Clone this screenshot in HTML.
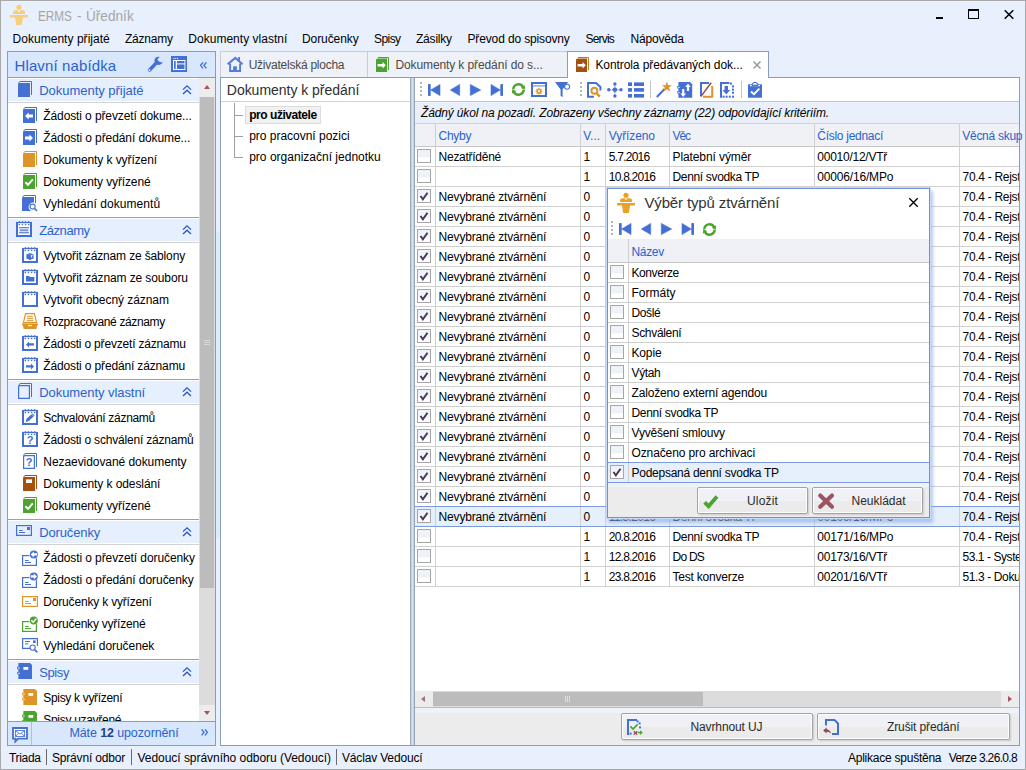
<!DOCTYPE html><html><head><meta charset="utf-8"><title>ERMS</title><style>
*{box-sizing:border-box;margin:0;padding:0}
html,body{width:1026px;height:770px;overflow:hidden}
body{background:#e8f0fd;font-family:"Liberation Sans",sans-serif;font-size:12px;color:#000;position:relative}
.b{position:absolute}
.t{position:absolute;white-space:nowrap;line-height:16px;height:16px}
svg{position:absolute;overflow:visible}
.bl{color:#2a62cc}
.it{font-style:italic}
.bd{font-weight:bold}
.gh13{font-size:13px}
.btn{color:#2a2a2a}
</style></head><body>
<div class="b" style="left:0px;top:0px;width:1026px;height:770px;border:1px solid #a9a9a9;"></div>
<svg style="left:9px;top:4px" width="20" height="22" viewBox="0 0 20 22"><circle cx="10" cy="3.3" r="2.6" fill="#f6cf7a"/><path d="M4 10V8.2Q4 6.2 6.5 6.2H13.5Q16 6.2 16 8.2V10Z" fill="#f6cf7a"/><rect x="9.1" y="6.1" width="1.8" height="1.6" fill="#fff" opacity=".85"/><path d="M1 11H19V13.4H14L12.8 21H7.2L6 13.4H1Z" fill="#f6cf7a"/></svg>
<span class="t" style="left:37.6px;top:7px;font-size:14.5px;color:#a6a6a6;line-height:18px;height:18px;transform:scaleX(0.8092);transform-origin:0 0">ERMS</span>
<span class="t" style="left:76.7px;top:7px;font-size:14.5px;color:#a6a6a6;line-height:18px;height:18px;transform:scaleX(0.9525);transform-origin:0 0">-</span>
<span class="t" style="left:86.2px;top:7px;font-size:14.5px;color:#a6a6a6;line-height:18px;height:18px;transform:scaleX(0.9395);transform-origin:0 0">Úředník</span>
<div class="b" style="left:936px;top:17px;width:7px;height:2px;background:#000;"></div>
<div class="b" style="left:968px;top:9px;width:11px;height:10px;border:1px solid #000;border-top-width:2px;"></div>
<svg style="left:1004px;top:10px" width="10" height="9" viewBox="0 0 10 9"><path d="M0.7 0.3L9.3 8.7M9.3 0.3L0.7 8.7" stroke="#000" stroke-width="1.5" fill="none"/></svg>
<span class="t mn" style="left:12.5px;top:31px;letter-spacing:0.036px;">Dokumenty přijaté</span>
<span class="t mn" style="left:125px;top:31px;letter-spacing:-0.238px;">Záznamy</span>
<span class="t mn" style="left:188.3px;top:31px;letter-spacing:0.018px;">Dokumenty vlastní</span>
<span class="t mn" style="left:302px;top:31px;letter-spacing:-0.078px;">Doručenky</span>
<span class="t mn" style="left:374px;top:31px;letter-spacing:-0.565px;">Spisy</span>
<span class="t mn" style="left:416px;top:31px;letter-spacing:-0.206px;">Zásilky</span>
<span class="t mn" style="left:467.5px;top:31px;letter-spacing:-0.139px;">Převod do spisovny</span>
<span class="t mn" style="left:585.6px;top:31px;letter-spacing:-0.844px;">Servis</span>
<span class="t mn" style="left:630.5px;top:31px;letter-spacing:-0.201px;">Nápověda</span>
<div class="b" style="left:7px;top:51px;width:209px;height:695px;background:#fff;border:1px solid #8b9db5;"></div>
<div class="b" style="left:7px;top:51px;width:209px;height:27px;background:#d9e7fd;border:1px solid #8b9db5;"></div>
<span class="t bl" style="left:14.5px;top:56px;font-size:15px;line-height:20px;height:20px;letter-spacing:0.121px">Hlavní nabídka</span>
<svg style="left:147px;top:56px" width="17" height="17" viewBox="0 0 17 17"><path d="M2.6 14L9.6 6.6" stroke="#4470d4" stroke-width="3.5" stroke-linecap="round" fill="none"/><circle cx="11.6" cy="4.8" r="4.1" fill="#4470d4"/><path d="M11.4 5L16 -0.6L18 3.4L14.6 6.6Z" fill="#d9e7fd"/><path d="M10.2 3.6L13.4 0.2L15.4 2.6L12.4 5.8Z" fill="#d9e7fd"/><circle cx="2.5" cy="14.1" r="0.9" fill="#fff"/></svg>
<svg style="left:171px;top:56px" width="16" height="16" viewBox="0 0 16 16"><rect x="0" y="0" width="16" height="16" fill="#4470d4"/><rect x="2.4" y="1.9" width="1" height="1" fill="#fff"/><rect x="4.2" y="1.9" width="1" height="1" fill="#fff"/><rect x="6" y="1.9" width="1" height="1" fill="#fff"/><rect x="2" y="4" width="12.4" height="10" fill="#fff"/><rect x="3" y="5" width="1.7" height="8" fill="#4470d4"/><rect x="5.9" y="5" width="7.6" height="2.4" fill="#4470d4"/><rect x="5.9" y="8.4" width="7.6" height="4.6" fill="#4470d4"/></svg>
<svg style="left:200px;top:62px" width="7" height="7" viewBox="0 0 7 7"><path d="M3 0.3L0.6 3.3L3 6.3M6.4 0.3L4 3.3L6.4 6.3" stroke="#3b6fd8" stroke-width="1.35" fill="none"/></svg>
<div class="b" style="left:199px;top:78px;width:16px;height:643px;background:#dcdcdc;"></div>
<div class="b" style="left:199px;top:78px;width:16px;height:19px;background:#ececec;"></div>
<div class="b" style="left:199px;top:705px;width:16px;height:16px;background:#ececec;"></div>
<div class="b" style="left:200px;top:97px;width:14px;height:491px;background:#bcbcbc;"></div>
<svg style="left:204px;top:85px" width="6" height="4"><path d="M3 0L6 4H0Z" fill="#a85060"/></svg>
<svg style="left:204px;top:711px" width="6" height="4"><path d="M0 0H6L3 4Z" fill="#a85060"/></svg>
<div class="b" style="left:204px;top:340px;width:6px;height:1px;background:#d9d9d9;"></div>
<div class="b" style="left:204px;top:342px;width:6px;height:1px;background:#d9d9d9;"></div>
<div class="b" style="left:204px;top:344px;width:6px;height:1px;background:#d9d9d9;"></div>
<div class="b" style="left:8px;top:78px;width:191px;height:643px;overflow:hidden">
<div class="b" style="left:0;top:1px;width:191px;height:22px;background:#e6effd"></div>
<div class="b" style="left:0;top:24px;width:191px;height:1px;background:#d2d2d2"></div>
<svg style="left:10px;top:3px" width="14" height="16" viewBox="0 0 14 16"><path d="M0 3.5Q0 2 1.5 2H12V16H0Z" fill="#4470d4"/><path d="M0.4 2.6L1.8 0.5H13.5V14" stroke="#4470d4" stroke-width="1" fill="none"/></svg>
<span class="t bl gh13" style="left:31.2px;top:5px;letter-spacing:-0.022px;">Dokumenty přijaté</span>
<svg style="left:174px;top:7px" width="10" height="10" viewBox="0 0 10 10"><path d="M1 4.6L5 0.8L9 4.6M1 9L5 5.2L9 9" stroke="#2458c8" stroke-width="1.3" fill="none"/></svg>
<svg style="left:15px;top:29px" width="14" height="16" viewBox="0 0 14 16"><path d="M0 3.5Q0 2 1.5 2H12V16H0Z" fill="#4470d4"/><path d="M0.4 2.6L1.8 0.5H13.5V14" stroke="#4470d4" stroke-width="1" fill="none"/><path d="M2 9L5.6 5.4V7.6H10V10.4H5.6V12.6Z" fill="#fff"/></svg>
<span class="t nv" style="left:35.3px;top:30px;letter-spacing:-0.109px;">Žádosti o převzetí dokume...</span>
<svg style="left:15px;top:51px" width="14" height="16" viewBox="0 0 14 16"><path d="M0 3.5Q0 2 1.5 2H12V16H0Z" fill="#4470d4"/><path d="M0.4 2.6L1.8 0.5H13.5V14" stroke="#4470d4" stroke-width="1" fill="none"/><path d="M10 9L6.4 5.4V7.6H2V10.4H6.4V12.6Z" fill="#fff"/></svg>
<span class="t nv" style="left:35.3px;top:52px;letter-spacing:-0.088px;">Žádosti o předání dokume...</span>
<svg style="left:15px;top:73px" width="14" height="16" viewBox="0 0 14 16"><path d="M0 3.5Q0 2 1.5 2H12V16H0Z" fill="#dd9428"/><path d="M0.4 2.6L1.8 0.5H13.5V14" stroke="#dd9428" stroke-width="1" fill="none"/></svg>
<span class="t nv" style="left:35.3px;top:74px;letter-spacing:-0.081px;">Dokumenty k vyřízení</span>
<svg style="left:15px;top:95px" width="14" height="16" viewBox="0 0 14 16"><path d="M0 3.5Q0 2 1.5 2H12V16H0Z" fill="#4da32f"/><path d="M0.4 2.6L1.8 0.5H13.5V14" stroke="#4da32f" stroke-width="1" fill="none"/><path d="M2.4 9.2L5 11.8L9.8 6.4" stroke="#fff" stroke-width="2" fill="none"/></svg>
<span class="t nv" style="left:35.3px;top:96px;letter-spacing:-0.119px;">Dokumenty vyřízené</span>
<svg style="left:14px;top:117px" width="16" height="17" viewBox="0 0 16 17"><path d="M0 3.5Q0 2 1.5 2H12V16H0Z" fill="#4470d4"/><path d="M0.4 2.6L1.8 0.5H13.5V14" stroke="#4470d4" stroke-width="1" fill="none"/><circle cx="11" cy="12" r="4.4" fill="#fff"/><circle cx="10.6" cy="11.6" r="2.5" fill="#fff" stroke="#4470d4" stroke-width="1.1"/><path d="M12.4 13.4L15 16" stroke="#4470d4" stroke-width="1.5"/></svg>
<span class="t nv" style="left:35.3px;top:118px;letter-spacing:0.063px;">Vyhledání dokumentů</span>
<div class="b" style="left:0;top:139px;width:191px;height:1px;background:#8ea2b8"></div>
<div class="b" style="left:0;top:141px;width:191px;height:22px;background:#e6effd"></div>
<div class="b" style="left:0;top:164px;width:191px;height:1px;background:#d2d2d2"></div>
<svg style="left:8px;top:143px" width="16" height="16" viewBox="0 0 16 16"><path d="M1 1.4V15H15V1.4" fill="#fff" stroke="#4470d4" stroke-width="2"/><rect x="0" y="0.9" width="16" height="1.3" fill="#4470d4"/><path d="M1.9 1.3L3.3 -0.1L4.699999999999999 1.3Z" fill="#4470d4"/><circle cx="3.3" cy="3.5" r="0.8" fill="#4470d4"/><path d="M5.0 1.3L6.4 -0.1L7.800000000000001 1.3Z" fill="#4470d4"/><circle cx="6.4" cy="3.5" r="0.8" fill="#4470d4"/><path d="M8.2 1.3L9.6 -0.1L11.0 1.3Z" fill="#4470d4"/><circle cx="9.6" cy="3.5" r="0.8" fill="#4470d4"/><path d="M11.299999999999999 1.3L12.7 -0.1L14.1 1.3Z" fill="#4470d4"/><circle cx="12.7" cy="3.5" r="0.8" fill="#4470d4"/><rect x="3.1" y="6.2" width="9.8" height="1.1" fill="#4470d4"/><rect x="3.6" y="8.3" width="8.8" height="2" fill="#4470d4" opacity=".75"/><rect x="3.1" y="11.2" width="9.8" height="1.1" fill="#4470d4"/></svg>
<span class="t bl gh13" style="left:31.2px;top:145px;letter-spacing:-0.425px;">Záznamy</span>
<svg style="left:174px;top:147px" width="10" height="10" viewBox="0 0 10 10"><path d="M1 4.6L5 0.8L9 4.6M1 9L5 5.2L9 9" stroke="#2458c8" stroke-width="1.3" fill="none"/></svg>
<svg style="left:14px;top:169px" width="16" height="16" viewBox="0 0 16 16"><path d="M1 1.4V15H15V1.4" fill="#fff" stroke="#4470d4" stroke-width="2"/><rect x="0" y="0.9" width="16" height="1.3" fill="#4470d4"/><path d="M1.9 1.3L3.3 -0.1L4.699999999999999 1.3Z" fill="#4470d4"/><circle cx="3.3" cy="3.5" r="0.8" fill="#4470d4"/><path d="M5.0 1.3L6.4 -0.1L7.800000000000001 1.3Z" fill="#4470d4"/><circle cx="6.4" cy="3.5" r="0.8" fill="#4470d4"/><path d="M8.2 1.3L9.6 -0.1L11.0 1.3Z" fill="#4470d4"/><circle cx="9.6" cy="3.5" r="0.8" fill="#4470d4"/><path d="M11.299999999999999 1.3L12.7 -0.1L14.1 1.3Z" fill="#4470d4"/><circle cx="12.7" cy="3.5" r="0.8" fill="#4470d4"/><path d="M4.4 7.4L8 6L11.6 7.4V11.6L8 13L4.4 11.6Z" fill="#4470d4"/><path d="M8.6 8.6L10.8 7.8L9.4 11Z" fill="#fff"/><ellipse cx="8" cy="6.9" rx="2" ry="0.6" fill="#7d9ce4"/></svg>
<span class="t nv" style="left:35.3px;top:170px;letter-spacing:-0.15px;">Vytvořit záznam ze šablony</span>
<svg style="left:14px;top:191px" width="16" height="16" viewBox="0 0 16 16"><path d="M1 1.4V15H15V1.4" fill="#fff" stroke="#4470d4" stroke-width="2"/><rect x="0" y="0.9" width="16" height="1.3" fill="#4470d4"/><path d="M1.9 1.3L3.3 -0.1L4.699999999999999 1.3Z" fill="#4470d4"/><circle cx="3.3" cy="3.5" r="0.8" fill="#4470d4"/><path d="M5.0 1.3L6.4 -0.1L7.800000000000001 1.3Z" fill="#4470d4"/><circle cx="6.4" cy="3.5" r="0.8" fill="#4470d4"/><path d="M8.2 1.3L9.6 -0.1L11.0 1.3Z" fill="#4470d4"/><circle cx="9.6" cy="3.5" r="0.8" fill="#4470d4"/><path d="M11.299999999999999 1.3L12.7 -0.1L14.1 1.3Z" fill="#4470d4"/><circle cx="12.7" cy="3.5" r="0.8" fill="#4470d4"/><path d="M4 7H7L8 8H12.4V12.6H4Z" fill="#4470d4"/></svg>
<span class="t nv" style="left:35.3px;top:192px;letter-spacing:-0.115px;">Vytvořit záznam ze souboru</span>
<svg style="left:14px;top:213px" width="16" height="16" viewBox="0 0 16 16"><path d="M1 1.4V15H15V1.4" fill="#fff" stroke="#4470d4" stroke-width="2"/><rect x="0" y="0.9" width="16" height="1.3" fill="#4470d4"/><path d="M1.9 1.3L3.3 -0.1L4.699999999999999 1.3Z" fill="#4470d4"/><circle cx="3.3" cy="3.5" r="0.8" fill="#4470d4"/><path d="M5.0 1.3L6.4 -0.1L7.800000000000001 1.3Z" fill="#4470d4"/><circle cx="6.4" cy="3.5" r="0.8" fill="#4470d4"/><path d="M8.2 1.3L9.6 -0.1L11.0 1.3Z" fill="#4470d4"/><circle cx="9.6" cy="3.5" r="0.8" fill="#4470d4"/><path d="M11.299999999999999 1.3L12.7 -0.1L14.1 1.3Z" fill="#4470d4"/><circle cx="12.7" cy="3.5" r="0.8" fill="#4470d4"/></svg>
<span class="t nv" style="left:35.3px;top:214px;letter-spacing:-0.063px;">Vytvořit obecný záznam</span>
<svg style="left:14px;top:235px" width="16" height="16" viewBox="0 0 16 16"><path d="M3.6 0.6H12.4L14.6 9.6H1.4Z" fill="#fff" stroke="#dd9428" stroke-width="1.2"/><rect x="5.2" y="2.8" width="5.6" height="1" fill="#dd9428"/><rect x="4.95" y="4.8" width="6.1" height="1" fill="#dd9428"/><rect x="4.7" y="6.8" width="6.6" height="1" fill="#dd9428"/><rect x="4.45" y="8.8" width="7.1" height="1" fill="#dd9428"/><path d="M0 10.4H16V12.2H15L14.4 16H1.6L1 12.2H0Z" fill="#dd9428"/><rect x="6" y="12" width="4" height="1.1" fill="#fff"/></svg>
<span class="t nv" style="left:35.3px;top:236px;letter-spacing:-0.356px;">Rozpracované záznamy</span>
<svg style="left:14px;top:257px" width="16" height="16" viewBox="0 0 16 16"><path d="M1 1.4V15H15V1.4" fill="#fff" stroke="#4470d4" stroke-width="2"/><rect x="0" y="0.9" width="16" height="1.3" fill="#4470d4"/><path d="M1.9 1.3L3.3 -0.1L4.699999999999999 1.3Z" fill="#4470d4"/><circle cx="3.3" cy="3.5" r="0.8" fill="#4470d4"/><path d="M5.0 1.3L6.4 -0.1L7.800000000000001 1.3Z" fill="#4470d4"/><circle cx="6.4" cy="3.5" r="0.8" fill="#4470d4"/><path d="M8.2 1.3L9.6 -0.1L11.0 1.3Z" fill="#4470d4"/><circle cx="9.6" cy="3.5" r="0.8" fill="#4470d4"/><path d="M11.299999999999999 1.3L12.7 -0.1L14.1 1.3Z" fill="#4470d4"/><circle cx="12.7" cy="3.5" r="0.8" fill="#4470d4"/><path d="M4 9.4L7 6.4V8.2H12V10.6H7V12.4Z" fill="#4470d4"/></svg>
<span class="t nv" style="left:35.3px;top:258px;letter-spacing:-0.189px;">Žádosti o převzetí záznamu</span>
<svg style="left:14px;top:279px" width="16" height="16" viewBox="0 0 16 16"><path d="M1 1.4V15H15V1.4" fill="#fff" stroke="#4470d4" stroke-width="2"/><rect x="0" y="0.9" width="16" height="1.3" fill="#4470d4"/><path d="M1.9 1.3L3.3 -0.1L4.699999999999999 1.3Z" fill="#4470d4"/><circle cx="3.3" cy="3.5" r="0.8" fill="#4470d4"/><path d="M5.0 1.3L6.4 -0.1L7.800000000000001 1.3Z" fill="#4470d4"/><circle cx="6.4" cy="3.5" r="0.8" fill="#4470d4"/><path d="M8.2 1.3L9.6 -0.1L11.0 1.3Z" fill="#4470d4"/><circle cx="9.6" cy="3.5" r="0.8" fill="#4470d4"/><path d="M11.299999999999999 1.3L12.7 -0.1L14.1 1.3Z" fill="#4470d4"/><circle cx="12.7" cy="3.5" r="0.8" fill="#4470d4"/><path d="M12 9.4L9 6.4V8.2H4V10.6H9V12.4Z" fill="#4470d4"/></svg>
<span class="t nv" style="left:35.3px;top:280px;letter-spacing:-0.148px;">Žádosti o předání záznamu</span>
<div class="b" style="left:0;top:301px;width:191px;height:1px;background:#8ea2b8"></div>
<div class="b" style="left:0;top:303px;width:191px;height:22px;background:#e6effd"></div>
<div class="b" style="left:0;top:326px;width:191px;height:1px;background:#d2d2d2"></div>
<svg style="left:10px;top:305px" width="14" height="16" viewBox="0 0 14 16"><path d="M0.6 3.8Q0.6 2.6 1.8 2.6H11.4V15.4H0.6Z" fill="none" stroke="#4470d4" stroke-width="1.2"/><path d="M0.5 2.8L2 0.5H13.5V14" stroke="#4470d4" stroke-width="1" fill="none"/></svg>
<span class="t bl gh13" style="left:31.2px;top:307px;letter-spacing:-0.057px;">Dokumenty vlastní</span>
<svg style="left:174px;top:309px" width="10" height="10" viewBox="0 0 10 10"><path d="M1 4.6L5 0.8L9 4.6M1 9L5 5.2L9 9" stroke="#2458c8" stroke-width="1.3" fill="none"/></svg>
<svg style="left:14px;top:331px" width="16" height="16" viewBox="0 0 16 16"><path d="M1 1.4V15H15V1.4" fill="#fff" stroke="#4470d4" stroke-width="2"/><rect x="0" y="0.9" width="16" height="1.3" fill="#4470d4"/><path d="M1.9 1.3L3.3 -0.1L4.699999999999999 1.3Z" fill="#4470d4"/><circle cx="3.3" cy="3.5" r="0.8" fill="#4470d4"/><path d="M5.0 1.3L6.4 -0.1L7.800000000000001 1.3Z" fill="#4470d4"/><circle cx="6.4" cy="3.5" r="0.8" fill="#4470d4"/><path d="M8.2 1.3L9.6 -0.1L11.0 1.3Z" fill="#4470d4"/><circle cx="9.6" cy="3.5" r="0.8" fill="#4470d4"/><path d="M11.299999999999999 1.3L12.7 -0.1L14.1 1.3Z" fill="#4470d4"/><circle cx="12.7" cy="3.5" r="0.8" fill="#4470d4"/><path d="M3.6 13L4.6 9.8L10.4 4.4L12.6 6.6L6.8 12Z" fill="#4470d4"/><path d="M9.6 5.2L11.8 7.4" stroke="#fff" stroke-width="0.6"/></svg>
<span class="t nv" style="left:35.3px;top:332px;letter-spacing:-0.303px;">Schvalování záznamů</span>
<svg style="left:14px;top:353px" width="16" height="16" viewBox="0 0 16 16"><path d="M1 1.4V15H15V1.4" fill="#fff" stroke="#4470d4" stroke-width="2"/><rect x="0" y="0.9" width="16" height="1.3" fill="#4470d4"/><path d="M1.9 1.3L3.3 -0.1L4.699999999999999 1.3Z" fill="#4470d4"/><circle cx="3.3" cy="3.5" r="0.8" fill="#4470d4"/><path d="M5.0 1.3L6.4 -0.1L7.800000000000001 1.3Z" fill="#4470d4"/><circle cx="6.4" cy="3.5" r="0.8" fill="#4470d4"/><path d="M8.2 1.3L9.6 -0.1L11.0 1.3Z" fill="#4470d4"/><circle cx="9.6" cy="3.5" r="0.8" fill="#4470d4"/><path d="M11.299999999999999 1.3L12.7 -0.1L14.1 1.3Z" fill="#4470d4"/><circle cx="12.7" cy="3.5" r="0.8" fill="#4470d4"/><text x="8" y="13" font-family="Liberation Sans" font-weight="bold" font-size="11" text-anchor="middle" fill="#4470d4">?</text></svg>
<span class="t nv" style="left:35.3px;top:354px;letter-spacing:-0.189px;">Žádosti o schválení záznamů</span>
<svg style="left:15px;top:375px" width="14" height="16" viewBox="0 0 14 16"><path d="M0.6 3.8Q0.6 2.6 1.8 2.6H11.4V15.4H0.6Z" fill="#fff" stroke="#4470d4" stroke-width="1.2"/><path d="M0.4 2.6L1.8 0.5H13.5V14" stroke="#4470d4" stroke-width="1" fill="none"/><text x="6" y="13" font-family="Liberation Sans" font-weight="bold" font-size="11" text-anchor="middle" fill="#4470d4">?</text></svg>
<span class="t nv" style="left:35.3px;top:376px;letter-spacing:-0.065px;">Nezaevidované dokumenty</span>
<svg style="left:15px;top:397px" width="14" height="16" viewBox="0 0 14 16"><path d="M0 3.5Q0 2 1.5 2H12V16H0Z" fill="#a5500e"/><path d="M0.4 2.6L1.8 0.5H13.5V14" stroke="#a5500e" stroke-width="1" fill="none"/><rect x="3" y="4.4" width="6" height="3.6" fill="#fff"/></svg>
<span class="t nv" style="left:35.3px;top:398px;letter-spacing:-0.084px;">Dokumenty k odeslání</span>
<svg style="left:15px;top:419px" width="14" height="16" viewBox="0 0 14 16"><path d="M0 3.5Q0 2 1.5 2H12V16H0Z" fill="#4da32f"/><path d="M0.4 2.6L1.8 0.5H13.5V14" stroke="#4da32f" stroke-width="1" fill="none"/><path d="M2.4 9.2L5 11.8L9.8 6.4" stroke="#fff" stroke-width="2" fill="none"/></svg>
<span class="t nv" style="left:35.3px;top:420px;letter-spacing:-0.119px;">Dokumenty vyřízené</span>
<div class="b" style="left:0;top:441px;width:191px;height:1px;background:#8ea2b8"></div>
<div class="b" style="left:0;top:443px;width:191px;height:22px;background:#e6effd"></div>
<div class="b" style="left:0;top:466px;width:191px;height:1px;background:#d2d2d2"></div>
<svg style="left:8px;top:447px" width="16" height="11" viewBox="0 0 16 11"><rect x="0.6" y="0.6" width="14.8" height="9.8" fill="none" stroke="#4470d4" stroke-width="1.2"/><rect x="3" y="5" width="3.6" height="1" fill="#4470d4"/><rect x="3" y="7" width="6" height="1" fill="#4470d4"/><rect x="11" y="2" width="3" height="3" fill="#4470d4"/></svg>
<span class="t bl gh13" style="left:31.2px;top:447px;letter-spacing:-0.134px;">Doručenky</span>
<svg style="left:174px;top:449px" width="10" height="10" viewBox="0 0 10 10"><path d="M1 4.6L5 0.8L9 4.6M1 9L5 5.2L9 9" stroke="#2458c8" stroke-width="1.3" fill="none"/></svg>
<svg style="left:14px;top:472px" width="17" height="16" viewBox="0 0 17 16"><rect x="0.6" y="5.6" width="13.8" height="9.8" fill="#fff" stroke="#4470d4" stroke-width="1.2"/><rect x="3" y="10" width="3.6" height="1" fill="#4470d4"/><rect x="3" y="12" width="6" height="1" fill="#4470d4"/><circle cx="11.8" cy="4.4" r="4.6" fill="#fff"/><circle cx="11.8" cy="4.4" r="4" fill="#4470d4"/><path d="M8.6 4.4L11.8 1.4V3.2H15V5.6H11.8V7.4Z" fill="#fff"/></svg>
<span class="t nv" style="left:35.3px;top:472px;letter-spacing:-0.087px;">Žádosti o převzetí doručenky</span>
<svg style="left:14px;top:494px" width="17" height="16" viewBox="0 0 17 16"><rect x="0.6" y="5.6" width="13.8" height="9.8" fill="#fff" stroke="#4470d4" stroke-width="1.2"/><rect x="3" y="10" width="3.6" height="1" fill="#4470d4"/><rect x="3" y="12" width="6" height="1" fill="#4470d4"/><circle cx="11.8" cy="4.4" r="4.6" fill="#fff"/><circle cx="11.8" cy="4.4" r="4" fill="#4470d4"/><path d="M15 4.4L11.8 1.4V3.2H8.6V5.6H11.8V7.4Z" fill="#fff"/></svg>
<span class="t nv" style="left:35.3px;top:494px;letter-spacing:-0.064px;">Žádosti o předání doručenky</span>
<svg style="left:14px;top:518px" width="16" height="11" viewBox="0 0 16 11"><rect x="0.6" y="0.6" width="14.8" height="9.8" fill="#fff" stroke="#dd9428" stroke-width="1.2"/><rect x="3" y="5" width="3.6" height="1" fill="#dd9428"/><rect x="3" y="7" width="6" height="1" fill="#dd9428"/><rect x="11" y="2" width="3" height="3" fill="#dd9428"/></svg>
<span class="t nv" style="left:35.3px;top:516px;letter-spacing:-0.181px;">Doručenky k vyřízení</span>
<svg style="left:14px;top:538px" width="17" height="16" viewBox="0 0 17 16"><rect x="0.6" y="5.6" width="13.8" height="9.8" fill="#fff" stroke="#4da32f" stroke-width="1.2"/><rect x="3" y="10" width="3.6" height="1" fill="#4da32f"/><rect x="3" y="12" width="6" height="1" fill="#4da32f"/><circle cx="11.8" cy="4.4" r="4.6" fill="#fff"/><circle cx="11.8" cy="4.4" r="4" fill="#4da32f"/><path d="M9.4 4.4L11.2 6.2L14.4 2.6" stroke="#fff" stroke-width="1.5" fill="none"/></svg>
<span class="t nv" style="left:35.3px;top:538px;letter-spacing:-0.22px;">Doručenky vyřízené</span>
<svg style="left:14px;top:560px" width="17" height="16" viewBox="0 0 17 16"><path d="M9 10.4H0.6V0.6H15.4V8" fill="#fff" stroke="#4470d4" stroke-width="1.2"/><rect x="3" y="3" width="5" height="1" fill="#4470d4"/><rect x="3" y="5.4" width="3.4" height="1" fill="#4470d4"/><rect x="11" y="2.4" width="2.6" height="2.6" fill="#4470d4"/><circle cx="10.6" cy="9.6" r="2.6" fill="#fff" stroke="#4470d4" stroke-width="1.1"/><path d="M12.6 11.6L15.4 14.4" stroke="#4470d4" stroke-width="1.6"/></svg>
<span class="t nv" style="left:35.3px;top:560px;letter-spacing:-0.07px;">Vyhledání doručenek</span>
<div class="b" style="left:0;top:581px;width:191px;height:1px;background:#8ea2b8"></div>
<div class="b" style="left:0;top:583px;width:191px;height:22px;background:#e6effd"></div>
<div class="b" style="left:0;top:606px;width:191px;height:1px;background:#d2d2d2"></div>
<svg style="left:9px;top:585px" width="15" height="16" viewBox="0 0 15 16"><path d="M1.4 0H13L15 2V16H1.4Z" fill="#4470d4"/><rect x="0" y="3.6" width="3" height="2.8" rx="1" fill="#4470d4"/><rect x="0" y="8.8" width="3" height="2.8" rx="1" fill="#4470d4"/><rect x="0.8" y="4.6" width="2" height="0.9" fill="#fff"/><rect x="0.8" y="9.8" width="2" height="0.9" fill="#fff"/><rect x="6.4" y="4" width="4.8" height="2.8" fill="#fff"/></svg>
<span class="t bl gh13" style="left:31.2px;top:587px;letter-spacing:-0.398px;">Spisy</span>
<svg style="left:174px;top:589px" width="10" height="10" viewBox="0 0 10 10"><path d="M1 4.6L5 0.8L9 4.6M1 9L5 5.2L9 9" stroke="#2458c8" stroke-width="1.3" fill="none"/></svg>
<svg style="left:14px;top:611px" width="15" height="16" viewBox="0 0 15 16"><path d="M1.4 0H13L15 2V16H1.4Z" fill="#dd9428"/><rect x="0" y="3.6" width="3" height="2.8" rx="1" fill="#dd9428"/><rect x="0" y="8.8" width="3" height="2.8" rx="1" fill="#dd9428"/><rect x="0.8" y="4.6" width="2" height="0.9" fill="#fff"/><rect x="0.8" y="9.8" width="2" height="0.9" fill="#fff"/><rect x="6.4" y="4" width="4.8" height="2.8" fill="#fff"/></svg>
<span class="t nv" style="left:35.3px;top:612px;letter-spacing:-0.324px;">Spisy k vyřízení</span>
<svg style="left:14px;top:633px" width="15" height="16" viewBox="0 0 15 16"><path d="M1.4 0H13L15 2V16H1.4Z" fill="#4da32f"/><rect x="0" y="3.6" width="3" height="2.8" rx="1" fill="#4da32f"/><rect x="0" y="8.8" width="3" height="2.8" rx="1" fill="#4da32f"/><rect x="0.8" y="4.6" width="2" height="0.9" fill="#fff"/><rect x="0.8" y="9.8" width="2" height="0.9" fill="#fff"/><rect x="6.4" y="4" width="4.8" height="2.8" fill="#fff"/></svg>
<span class="t nv" style="left:35.3px;top:634px;letter-spacing:-0.3px;">Spisy uzavřené</span>
</div>
<div class="b" style="left:7px;top:721px;width:209px;height:25px;background:#d9e7fd;border:1px solid #8b9db5;"></div>
<div class="b" style="left:31px;top:722px;width:1px;height:23px;background:#a9c0e4;"></div>
<svg style="left:12px;top:727px" width="16" height="15" viewBox="0 0 16 15"><path d="M1 1H15V11.6H6L3.4 14.4V11.6H1Z" fill="#fff" stroke="#4470d4" stroke-width="1.8"/><rect x="3.4" y="3.4" width="9.2" height="6" fill="none" stroke="#4470d4" stroke-width="0.9"/><path d="M3.6 3.6L8 7.2L12.4 3.6M3.6 9.2L6.6 6.2M12.4 9.2L9.4 6.2" stroke="#4470d4" stroke-width="0.9" fill="none"/></svg>
<span class="t bl" style="left:69.5px;top:725px;font-size:12.5px;letter-spacing:-0.12px">Máte <b style="color:#1f3f86">12</b> upozornění</span>
<svg style="left:201px;top:729px" width="7" height="7" viewBox="0 0 7 7"><path d="M0.6 0.3L3 3.3L0.6 6.3M4 0.3L6.4 3.3L4 6.3" stroke="#3b6fd8" stroke-width="1.35" fill="none"/></svg>
<div class="b" style="left:216px;top:232px;width:4px;height:306px;background:#d7ecfc;"></div>
<span class="t sb" style="left:9px;top:750px;letter-spacing:-0.322px;">Triada</span>
<div class="b" style="left:46px;top:749px;width:1px;height:16px;background:#6a6a6a;"></div>
<span class="t sb" style="left:52px;top:750px;letter-spacing:-0.183px;">Správní odbor</span>
<div class="b" style="left:131px;top:749px;width:1px;height:16px;background:#6a6a6a;"></div>
<span class="t sb" style="left:137.5px;top:750px;letter-spacing:-0.039px;">Vedoucí správního odboru (Vedoucí)</span>
<div class="b" style="left:336px;top:749px;width:1px;height:16px;background:#6a6a6a;"></div>
<span class="t sb" style="left:342px;top:750px;letter-spacing:-0.165px;">Václav Vedoucí</span>
<span class="t sb" style="left:848px;top:750px;letter-spacing:-0.242px;">Aplikace spuštěna</span>
<span class="t sb" style="left:948.8px;top:750px;letter-spacing:-0.651px;">Verze 3.26.0.8</span>
<div class="b" style="left:220px;top:51px;width:148px;height:27px;background:#eef1f7;border:1px solid #c9ccd2;border-bottom:none;"></div>
<svg style="left:227px;top:57px" width="16" height="15" viewBox="0 0 16 15"><path d="M0.6 7.2L8.3 0.9L15.6 7.2" stroke="#557cd8" stroke-width="2.1" fill="none"/><path d="M3.1 6.4V14H13.1V6.4" stroke="#557cd8" stroke-width="1.9" fill="none"/><rect x="6.1" y="9.3" width="3.8" height="5.6" fill="#557cd8"/><rect x="11.2" y="0" width="1.8" height="4.4" fill="#557cd8"/></svg>
<span class="t tb" style="left:248.7px;top:57px;letter-spacing:-0.249px;color:#4a4a4a;">Uživatelská plocha</span>
<div class="b" style="left:367px;top:51px;width:201px;height:27px;background:#eef1f7;border:1px solid #c9ccd2;border-bottom:none;"></div>
<svg style="left:376px;top:57px" width="13" height="15" viewBox="0 0 13 15"><path d="M0 3Q0 1.5 1.5 1.5H11V15H0Z" fill="#4da32f"/><path d="M2 0.5H12.5V13" stroke="#4da32f" stroke-width="1" fill="none"/><path d="M9.8 8.2L6.6 5V7H1.6V9.4H6.6V11.4Z" fill="#fff"/></svg>
<span class="t tb" style="left:395.4px;top:57px;letter-spacing:-0.105px;color:#4a4a4a;">Dokumenty k předání do s...</span>
<div class="b" style="left:220px;top:77px;width:800px;height:669px;background:#fff;border:1px solid #8b9db5;"></div>
<div class="b" style="left:567px;top:51px;width:202px;height:27px;background:#fff;border:1px solid #8b9db5;border-bottom:none;"></div>
<svg style="left:576px;top:57px" width="13" height="15" viewBox="0 0 13 15"><path d="M0 3Q0 1.5 1.5 1.5H11V15H0Z" fill="#a5500e"/><path d="M2 0.5H12.5V13" stroke="#c8780f" stroke-width="1" fill="none"/><path d="M9.8 8.2L6.6 5V7H1.6V9.4H6.6V11.4Z" fill="#fff"/></svg>
<span class="t tb" style="left:595.4px;top:57px;letter-spacing:-0.08px;">Kontrola předávaných dok...</span>
<svg style="left:753px;top:61px" width="8" height="8"><path d="M0.5 0.5L7.5 7.5M7.5 0.5L0.5 7.5" stroke="#9a9a9a" stroke-width="1.5" fill="none"/></svg>
<span class="t" style="left:226.8px;top:80px;font-size:14px;color:#2e2e2e;line-height:20px;height:20px;letter-spacing:-0.025px">Dokumenty k předání</span>
<div class="b" style="left:221px;top:101px;width:189px;height:1px;background:#d2d2d2;"></div>
<div class="b" style="left:234px;top:103px;width:1px;height:54px;background:#a0a0a0;"></div>
<div class="b" style="left:234px;top:115px;width:9px;height:1px;background:#a0a0a0;"></div>
<div class="b" style="left:234px;top:136px;width:9px;height:1px;background:#a0a0a0;"></div>
<div class="b" style="left:234px;top:157px;width:9px;height:1px;background:#a0a0a0;"></div>
<div class="b" style="left:245px;top:106px;width:76px;height:18px;background:#f1f1f1;border:1px solid #dcdcdc;"></div>
<span class="t bd" style="left:249.2px;top:107px;letter-spacing:-0.452px">pro uživatele</span>
<span class="t tr" style="left:249.2px;top:128px;letter-spacing:-0.017px;">pro pracovní pozici</span>
<span class="t tr" style="left:249.2px;top:149px;letter-spacing:0.008px;">pro organizační jednotku</span>
<div class="b" style="left:410px;top:78px;width:5px;height:667px;background:#d2e5fb;border-left:1px solid #a3abb4;border-right:1px solid #9aa6b4"></div>
<div class="b" style="left:411px;top:78px;width:1px;height:667px;background:#b5d3f7;"></div>
<div class="b" style="left:413px;top:78px;width:1px;height:667px;background:#b5d3f7;"></div>
<div class="b" style="left:415px;top:101px;width:604px;height:1px;background:#c2c6cc;"></div>
<div class="b" style="left:420px;top:82px;width:2px;height:2px;background:#b4b4b4"></div><div class="b" style="left:420px;top:86px;width:2px;height:2px;background:#b4b4b4"></div><div class="b" style="left:420px;top:90px;width:2px;height:2px;background:#b4b4b4"></div><div class="b" style="left:420px;top:94px;width:2px;height:2px;background:#b4b4b4"></div><svg style="left:428px;top:84px" width="12" height="12" viewBox="0 0 12 12"><rect x="0" y="0" width="2.7" height="12" rx="0.8" fill="#4470d4"/><path d="M12 0.4V11.6L2.7 6Z" fill="#4470d4" stroke="#4470d4" stroke-width="0.6" stroke-linejoin="round"/></svg><svg style="left:450px;top:84px" width="10" height="12" viewBox="0 0 10 12"><path d="M9.7 0.4V11.6L0.3 6Z" fill="#4470d4" stroke="#4470d4" stroke-width="0.6" stroke-linejoin="round"/></svg><svg style="left:470px;top:84px" width="11" height="12" viewBox="0 0 11 12"><path d="M0.3 0.4V11.6L10.7 6Z" fill="#4470d4" stroke="#4470d4" stroke-width="0.6" stroke-linejoin="round"/></svg><svg style="left:491px;top:84px" width="12" height="12" viewBox="0 0 12 12"><rect x="9.3" y="0" width="2.7" height="12" rx="0.8" fill="#4470d4"/><path d="M0 0.4V11.6L9.3 6Z" fill="#4470d4" stroke="#4470d4" stroke-width="0.6" stroke-linejoin="round"/></svg><svg style="left:511px;top:82px" width="15" height="15" viewBox="0 0 15 15"><path d="M2.32 7.05A5.2 5.2 0 0 1 12 4.9" stroke="#4da32f" stroke-width="2.4" fill="none"/><path d="M14.2 3.2L9.8 5.8L13.6 8Z" fill="#4da32f"/><path d="M12.68 7.95A5.2 5.2 0 0 1 3 10.1" stroke="#4da32f" stroke-width="2.4" fill="none"/><path d="M0.8 11.8L5.2 9.2L1.4 7Z" fill="#4da32f"/></svg><svg style="left:531px;top:82px" width="16" height="15" viewBox="0 0 16 15"><rect x="1" y="1" width="14" height="13" fill="#fff" stroke="#4470d4" stroke-width="2"/><rect x="1" y="3.5" width="14" height="0.9" fill="#4470d4"/><rect x="7.3" y="5.7" width="1.4" height="7" fill="#dd9428" opacity=".75" transform="rotate(0 8 9.2)"/><rect x="7.3" y="5.7" width="1.4" height="7" fill="#dd9428" opacity=".75" transform="rotate(45 8 9.2)"/><rect x="7.3" y="5.7" width="1.4" height="7" fill="#dd9428" opacity=".75" transform="rotate(90 8 9.2)"/><rect x="7.3" y="5.7" width="1.4" height="7" fill="#dd9428" opacity=".75" transform="rotate(135 8 9.2)"/><circle cx="8" cy="9.2" r="2.5" fill="#dd9428"/><circle cx="8" cy="9.2" r="1.1" fill="#fff"/></svg><svg style="left:555px;top:82px" width="16" height="15" viewBox="0 0 16 15"><path d="M0 0H13.2L7.6 7.4V15L5.6 14V7.4Z" fill="#4470d4"/><circle cx="12.1" cy="4.8" r="2.5" fill="#fff" stroke="#4470d4" stroke-width="1.1"/></svg><div class="b" style="left:580px;top:82px;width:2px;height:2px;background:#b4b4b4"></div><div class="b" style="left:580px;top:86px;width:2px;height:2px;background:#b4b4b4"></div><div class="b" style="left:580px;top:90px;width:2px;height:2px;background:#b4b4b4"></div><div class="b" style="left:580px;top:94px;width:2px;height:2px;background:#b4b4b4"></div><svg style="left:587px;top:82px" width="15" height="16" viewBox="0 0 15 16"><path d="M7 14.8H1V1H9L13.4 5V8.4" fill="none" stroke="#4470d4" stroke-width="2"/><circle cx="7.4" cy="8.7" r="3" fill="#fff" stroke="#dd9428" stroke-width="2"/><path d="M9.6 11.2L12.8 14.6" stroke="#dd9428" stroke-width="2.4"/></svg><svg style="left:607px;top:82px" width="16" height="16" viewBox="0 0 16 16"><path d="M7.9 2V14M1.8 7.8H14" stroke="#4470d4" stroke-width="0.9" stroke-dasharray="1 0.6"/><circle cx="7.9" cy="2" r="1.7" fill="#4470d4"/><circle cx="7.9" cy="14" r="1.7" fill="#4470d4"/><circle cx="1.8" cy="7.8" r="1.7" fill="#4470d4"/><circle cx="14" cy="7.8" r="1.7" fill="#4470d4"/><circle cx="7.9" cy="7.8" r="2.3" fill="#4470d4"/></svg><svg style="left:628px;top:82px" width="16" height="16" viewBox="0 0 16 16"><rect x="0" y="0.4" width="4" height="3.6" fill="#4470d4"/><rect x="6" y="0.4" width="10" height="3.6" fill="#4470d4"/><rect x="0" y="6.1" width="4" height="3.6" fill="#4470d4"/><rect x="6" y="6.1" width="10" height="3.6" fill="#4470d4"/><rect x="0" y="12" width="4" height="3.6" fill="#4470d4"/><rect x="6" y="12" width="10" height="3.6" fill="#4470d4"/></svg><div class="b" style="left:650px;top:81px;width:1px;height:17px;background:#c4c4c4"></div><svg style="left:656px;top:82px" width="16" height="16" viewBox="0 0 16 16"><path d="M0.8 15L8.6 7" stroke="#4470d4" stroke-width="2"/><path d="M10.9 -0.4L12.2 3.2L16 3.2L13 5.6L14.2 9.4L10.9 7.2L7.6 9.4L8.8 5.6L5.8 3.2L9.6 3.2Z" fill="#dd9428"/></svg><svg style="left:677px;top:82px" width="16" height="16" viewBox="0 0 16 16"><path d="M1.4 0H13L15.2 2.2V15.7H1.4Z" fill="#4470d4"/><rect x="0" y="4" width="3" height="2.6" rx="1" fill="#4470d4"/><rect x="0" y="9" width="3" height="2.6" rx="1" fill="#4470d4"/><rect x="0.8" y="4.9" width="1.8" height="0.9" fill="#fff"/><rect x="0.8" y="9.9" width="1.8" height="0.9" fill="#fff"/><path d="M11 1.6L13.8 5H12.1V9H9.9V5H8.2Z" fill="#fff"/><path d="M6.2 15L3.4 11.4H5.1V7H7.3V11.4H9Z" fill="#fff"/></svg><svg style="left:700px;top:82px" width="14" height="16" viewBox="0 0 14 16"><path d="M9 1H1V14" fill="none" stroke="#4470d4" stroke-width="2"/><path d="M12.2 4V14.8H3" fill="none" stroke="#dd9428" stroke-width="2"/><path d="M0.8 14.6L11.2 0.8" stroke="#9a4a4a" stroke-width="1.5"/></svg><svg style="left:720px;top:82px" width="15" height="16" viewBox="0 0 15 16"><path d="M1 15.7V1H9.4" fill="none" stroke="#4470d4" stroke-width="2"/><rect x="10" y="0.6" width="2" height="2" fill="#4470d4"/><rect x="12" y="3.4" width="2" height="2" fill="#4470d4"/><rect x="12" y="6.6" width="2" height="2" fill="#4470d4"/><rect x="12" y="9.8" width="2" height="2" fill="#4470d4"/><rect x="12" y="13.7" width="2" height="2" fill="#4470d4"/><rect x="8.8" y="13.7" width="2" height="2" fill="#4470d4"/><rect x="5.6" y="13.7" width="2" height="2" fill="#4470d4"/><rect x="2.6" y="13.7" width="2" height="2" fill="#4470d4"/><path d="M6.3 12.4L2.5 8H4.6V4H8V8H10.1Z" fill="#4470d4"/></svg><div class="b" style="left:741px;top:81px;width:1px;height:17px;background:#c4c4c4"></div><svg style="left:748px;top:82px" width="14" height="16" viewBox="0 0 14 16"><path d="M0 2.3H14V15.7H0Z" fill="#4470d4"/><rect x="2" y="3" width="10" height="1.2" fill="#fff"/><path d="M4.2 3.4V2Q7 -1.6 9.8 2V3.4Z" fill="#fff" stroke="#4470d4" stroke-width="1.1"/><path d="M3 9.4L6 12.2L11.4 6.6" stroke="#fff" stroke-width="2" fill="none"/></svg>
<div class="b" style="left:415px;top:102px;width:604px;height:21px;background:#e9f0fb;"></div>
<div class="b" style="left:415px;top:123px;width:604px;height:1px;background:#d2d2d2;"></div>
<span class="t it st" style="left:421px;top:105px;letter-spacing:-0.144px;">Žádný úkol na pozadí. Zobrazeny všechny záznamy (22) odpovídající kritériím.</span>
<div class="b" style="left:415px;top:124px;width:604px;height:22px;background:#eff1f7;"></div>
<div class="b" style="left:415px;top:146px;width:604px;height:1px;background:#c6c6c6;"></div>
<div class="b" style="left:435px;top:124px;width:1px;height:463px;background:#d0d0d0;"></div>
<div class="b" style="left:580px;top:124px;width:1px;height:463px;background:#d0d0d0;"></div>
<div class="b" style="left:605px;top:124px;width:1px;height:463px;background:#d0d0d0;"></div>
<div class="b" style="left:669px;top:124px;width:1px;height:463px;background:#d0d0d0;"></div>
<div class="b" style="left:814px;top:124px;width:1px;height:463px;background:#d0d0d0;"></div>
<div class="b" style="left:959px;top:124px;width:1px;height:463px;background:#d0d0d0;"></div>
<span class="t bl gh" style="left:438.5px;top:128px;letter-spacing:-0.27px;">Chyby</span>
<span class="t bl gh" style="left:583.2px;top:128px;letter-spacing:0.027px;">V...</span>
<span class="t bl gh" style="left:608.8px;top:128px;letter-spacing:-0.095px;">Vyřízeno</span>
<span class="t bl gh" style="left:672.5px;top:128px;letter-spacing:-1.031px;">Věc</span>
<span class="t bl gh" style="left:817.3px;top:128px;letter-spacing:-0.286px;">Číslo jednací</span>
<span class="t bl gh" style="left:962.3px;top:128px;letter-spacing:-0.285px;">Věcná skup</span>
<div class="b" style="left:415px;top:147px;width:604px;height:544px;overflow:hidden">
<div class="b" style="left:0;top:19px;width:604px;height:1px;background:#d0d0d0"></div>
<div class="b" style="left:2px;top:2px;width:14px;height:14px;border:1px solid #a6a6a6;background:linear-gradient(#eef2f9 0,#eef2f9 62%,#fff 63%)"></div>
<span class="t gc" style="left:23.6px;top:2px;letter-spacing:-0.274px;">Nezatříděné</span>
<span class="t gc" style="left:168.5px;top:2px;">1</span>
<span class="t gc" style="left:193.8px;top:2px;letter-spacing:-0.762px;">5.7.2016</span>
<span class="t gc" style="left:257.5px;top:2px;letter-spacing:-0.099px;">Platební výměr</span>
<span class="t gc" style="left:402.3px;top:2px;letter-spacing:-0.254px;">00010/12/VTř</span>
<div class="b" style="left:0;top:39px;width:604px;height:1px;background:#d0d0d0"></div>
<div class="b" style="left:2px;top:22px;width:14px;height:14px;border:1px solid #a6a6a6;background:linear-gradient(#eef2f9 0,#eef2f9 62%,#fff 63%)"></div>
<span class="t gc" style="left:168.5px;top:22px;">1</span>
<span class="t gc" style="left:193.8px;top:22px;letter-spacing:-0.775px;">10.8.2016</span>
<span class="t gc" style="left:257.5px;top:22px;letter-spacing:-0.34px;">Denní svodka TP</span>
<span class="t gc" style="left:402.3px;top:22px;letter-spacing:-0.179px;">00006/16/MPo</span>
<span class="t gc" style="left:547.5px;top:22px;letter-spacing:-0.292px;">70.4 - Rejst</span>
<div class="b" style="left:0;top:59px;width:604px;height:1px;background:#d0d0d0"></div>
<div class="b" style="left:2px;top:42px;width:14px;height:14px;border:1px solid #a6a6a6;background:linear-gradient(#eef2f9 0,#eef2f9 62%,#fff 63%)"></div><svg style="left:2px;top:42px" width="14" height="14" viewBox="0 0 14 14"><path d="M3.5 7L5.9 10.4L10.5 3.8" stroke="#4a3555" stroke-width="1.9" fill="none"/></svg>
<span class="t gc" style="left:23.6px;top:42px;letter-spacing:-0.169px;">Nevybrané ztvárnění</span>
<span class="t gc" style="left:168.5px;top:42px;">0</span>
<span class="t gc" style="left:193.8px;top:42px;letter-spacing:-0.67px;">11.8.2016</span>
<span class="t gc" style="left:257.5px;top:42px;letter-spacing:-0.34px;">Denní svodka TP</span>
<span class="t gc" style="left:402.3px;top:42px;letter-spacing:-0.179px;">00109/16/MPo</span>
<span class="t gc" style="left:547.5px;top:42px;letter-spacing:-0.292px;">70.4 - Rejst</span>
<div class="b" style="left:0;top:79px;width:604px;height:1px;background:#d0d0d0"></div>
<div class="b" style="left:2px;top:62px;width:14px;height:14px;border:1px solid #a6a6a6;background:linear-gradient(#eef2f9 0,#eef2f9 62%,#fff 63%)"></div><svg style="left:2px;top:62px" width="14" height="14" viewBox="0 0 14 14"><path d="M3.5 7L5.9 10.4L10.5 3.8" stroke="#4a3555" stroke-width="1.9" fill="none"/></svg>
<span class="t gc" style="left:23.6px;top:62px;letter-spacing:-0.169px;">Nevybrané ztvárnění</span>
<span class="t gc" style="left:168.5px;top:62px;">0</span>
<span class="t gc" style="left:193.8px;top:62px;letter-spacing:-0.67px;">11.8.2016</span>
<span class="t gc" style="left:257.5px;top:62px;letter-spacing:-0.34px;">Denní svodka TP</span>
<span class="t gc" style="left:402.3px;top:62px;letter-spacing:-0.179px;">00109/16/MPo</span>
<span class="t gc" style="left:547.5px;top:62px;letter-spacing:-0.292px;">70.4 - Rejst</span>
<div class="b" style="left:0;top:99px;width:604px;height:1px;background:#d0d0d0"></div>
<div class="b" style="left:2px;top:82px;width:14px;height:14px;border:1px solid #a6a6a6;background:linear-gradient(#eef2f9 0,#eef2f9 62%,#fff 63%)"></div><svg style="left:2px;top:82px" width="14" height="14" viewBox="0 0 14 14"><path d="M3.5 7L5.9 10.4L10.5 3.8" stroke="#4a3555" stroke-width="1.9" fill="none"/></svg>
<span class="t gc" style="left:23.6px;top:82px;letter-spacing:-0.169px;">Nevybrané ztvárnění</span>
<span class="t gc" style="left:168.5px;top:82px;">0</span>
<span class="t gc" style="left:193.8px;top:82px;letter-spacing:-0.67px;">11.8.2016</span>
<span class="t gc" style="left:257.5px;top:82px;letter-spacing:-0.34px;">Denní svodka TP</span>
<span class="t gc" style="left:402.3px;top:82px;letter-spacing:-0.179px;">00109/16/MPo</span>
<span class="t gc" style="left:547.5px;top:82px;letter-spacing:-0.292px;">70.4 - Rejst</span>
<div class="b" style="left:0;top:119px;width:604px;height:1px;background:#d0d0d0"></div>
<div class="b" style="left:2px;top:102px;width:14px;height:14px;border:1px solid #a6a6a6;background:linear-gradient(#eef2f9 0,#eef2f9 62%,#fff 63%)"></div><svg style="left:2px;top:102px" width="14" height="14" viewBox="0 0 14 14"><path d="M3.5 7L5.9 10.4L10.5 3.8" stroke="#4a3555" stroke-width="1.9" fill="none"/></svg>
<span class="t gc" style="left:23.6px;top:102px;letter-spacing:-0.169px;">Nevybrané ztvárnění</span>
<span class="t gc" style="left:168.5px;top:102px;">0</span>
<span class="t gc" style="left:193.8px;top:102px;letter-spacing:-0.67px;">11.8.2016</span>
<span class="t gc" style="left:257.5px;top:102px;letter-spacing:-0.34px;">Denní svodka TP</span>
<span class="t gc" style="left:402.3px;top:102px;letter-spacing:-0.179px;">00109/16/MPo</span>
<span class="t gc" style="left:547.5px;top:102px;letter-spacing:-0.292px;">70.4 - Rejst</span>
<div class="b" style="left:0;top:139px;width:604px;height:1px;background:#d0d0d0"></div>
<div class="b" style="left:2px;top:122px;width:14px;height:14px;border:1px solid #a6a6a6;background:linear-gradient(#eef2f9 0,#eef2f9 62%,#fff 63%)"></div><svg style="left:2px;top:122px" width="14" height="14" viewBox="0 0 14 14"><path d="M3.5 7L5.9 10.4L10.5 3.8" stroke="#4a3555" stroke-width="1.9" fill="none"/></svg>
<span class="t gc" style="left:23.6px;top:122px;letter-spacing:-0.169px;">Nevybrané ztvárnění</span>
<span class="t gc" style="left:168.5px;top:122px;">0</span>
<span class="t gc" style="left:193.8px;top:122px;letter-spacing:-0.67px;">11.8.2016</span>
<span class="t gc" style="left:257.5px;top:122px;letter-spacing:-0.34px;">Denní svodka TP</span>
<span class="t gc" style="left:402.3px;top:122px;letter-spacing:-0.179px;">00109/16/MPo</span>
<span class="t gc" style="left:547.5px;top:122px;letter-spacing:-0.292px;">70.4 - Rejst</span>
<div class="b" style="left:0;top:159px;width:604px;height:1px;background:#d0d0d0"></div>
<div class="b" style="left:2px;top:142px;width:14px;height:14px;border:1px solid #a6a6a6;background:linear-gradient(#eef2f9 0,#eef2f9 62%,#fff 63%)"></div><svg style="left:2px;top:142px" width="14" height="14" viewBox="0 0 14 14"><path d="M3.5 7L5.9 10.4L10.5 3.8" stroke="#4a3555" stroke-width="1.9" fill="none"/></svg>
<span class="t gc" style="left:23.6px;top:142px;letter-spacing:-0.169px;">Nevybrané ztvárnění</span>
<span class="t gc" style="left:168.5px;top:142px;">0</span>
<span class="t gc" style="left:193.8px;top:142px;letter-spacing:-0.67px;">11.8.2016</span>
<span class="t gc" style="left:257.5px;top:142px;letter-spacing:-0.34px;">Denní svodka TP</span>
<span class="t gc" style="left:402.3px;top:142px;letter-spacing:-0.179px;">00109/16/MPo</span>
<span class="t gc" style="left:547.5px;top:142px;letter-spacing:-0.292px;">70.4 - Rejst</span>
<div class="b" style="left:0;top:179px;width:604px;height:1px;background:#d0d0d0"></div>
<div class="b" style="left:2px;top:162px;width:14px;height:14px;border:1px solid #a6a6a6;background:linear-gradient(#eef2f9 0,#eef2f9 62%,#fff 63%)"></div><svg style="left:2px;top:162px" width="14" height="14" viewBox="0 0 14 14"><path d="M3.5 7L5.9 10.4L10.5 3.8" stroke="#4a3555" stroke-width="1.9" fill="none"/></svg>
<span class="t gc" style="left:23.6px;top:162px;letter-spacing:-0.169px;">Nevybrané ztvárnění</span>
<span class="t gc" style="left:168.5px;top:162px;">0</span>
<span class="t gc" style="left:193.8px;top:162px;letter-spacing:-0.67px;">11.8.2016</span>
<span class="t gc" style="left:257.5px;top:162px;letter-spacing:-0.34px;">Denní svodka TP</span>
<span class="t gc" style="left:402.3px;top:162px;letter-spacing:-0.179px;">00109/16/MPo</span>
<span class="t gc" style="left:547.5px;top:162px;letter-spacing:-0.292px;">70.4 - Rejst</span>
<div class="b" style="left:0;top:199px;width:604px;height:1px;background:#d0d0d0"></div>
<div class="b" style="left:2px;top:182px;width:14px;height:14px;border:1px solid #a6a6a6;background:linear-gradient(#eef2f9 0,#eef2f9 62%,#fff 63%)"></div><svg style="left:2px;top:182px" width="14" height="14" viewBox="0 0 14 14"><path d="M3.5 7L5.9 10.4L10.5 3.8" stroke="#4a3555" stroke-width="1.9" fill="none"/></svg>
<span class="t gc" style="left:23.6px;top:182px;letter-spacing:-0.169px;">Nevybrané ztvárnění</span>
<span class="t gc" style="left:168.5px;top:182px;">0</span>
<span class="t gc" style="left:193.8px;top:182px;letter-spacing:-0.67px;">11.8.2016</span>
<span class="t gc" style="left:257.5px;top:182px;letter-spacing:-0.34px;">Denní svodka TP</span>
<span class="t gc" style="left:402.3px;top:182px;letter-spacing:-0.179px;">00109/16/MPo</span>
<span class="t gc" style="left:547.5px;top:182px;letter-spacing:-0.292px;">70.4 - Rejst</span>
<div class="b" style="left:0;top:219px;width:604px;height:1px;background:#d0d0d0"></div>
<div class="b" style="left:2px;top:202px;width:14px;height:14px;border:1px solid #a6a6a6;background:linear-gradient(#eef2f9 0,#eef2f9 62%,#fff 63%)"></div><svg style="left:2px;top:202px" width="14" height="14" viewBox="0 0 14 14"><path d="M3.5 7L5.9 10.4L10.5 3.8" stroke="#4a3555" stroke-width="1.9" fill="none"/></svg>
<span class="t gc" style="left:23.6px;top:202px;letter-spacing:-0.169px;">Nevybrané ztvárnění</span>
<span class="t gc" style="left:168.5px;top:202px;">0</span>
<span class="t gc" style="left:193.8px;top:202px;letter-spacing:-0.67px;">11.8.2016</span>
<span class="t gc" style="left:257.5px;top:202px;letter-spacing:-0.34px;">Denní svodka TP</span>
<span class="t gc" style="left:402.3px;top:202px;letter-spacing:-0.179px;">00109/16/MPo</span>
<span class="t gc" style="left:547.5px;top:202px;letter-spacing:-0.292px;">70.4 - Rejst</span>
<div class="b" style="left:0;top:239px;width:604px;height:1px;background:#d0d0d0"></div>
<div class="b" style="left:2px;top:222px;width:14px;height:14px;border:1px solid #a6a6a6;background:linear-gradient(#eef2f9 0,#eef2f9 62%,#fff 63%)"></div><svg style="left:2px;top:222px" width="14" height="14" viewBox="0 0 14 14"><path d="M3.5 7L5.9 10.4L10.5 3.8" stroke="#4a3555" stroke-width="1.9" fill="none"/></svg>
<span class="t gc" style="left:23.6px;top:222px;letter-spacing:-0.169px;">Nevybrané ztvárnění</span>
<span class="t gc" style="left:168.5px;top:222px;">0</span>
<span class="t gc" style="left:193.8px;top:222px;letter-spacing:-0.67px;">11.8.2016</span>
<span class="t gc" style="left:257.5px;top:222px;letter-spacing:-0.34px;">Denní svodka TP</span>
<span class="t gc" style="left:402.3px;top:222px;letter-spacing:-0.179px;">00109/16/MPo</span>
<span class="t gc" style="left:547.5px;top:222px;letter-spacing:-0.292px;">70.4 - Rejst</span>
<div class="b" style="left:0;top:259px;width:604px;height:1px;background:#d0d0d0"></div>
<div class="b" style="left:2px;top:242px;width:14px;height:14px;border:1px solid #a6a6a6;background:linear-gradient(#eef2f9 0,#eef2f9 62%,#fff 63%)"></div><svg style="left:2px;top:242px" width="14" height="14" viewBox="0 0 14 14"><path d="M3.5 7L5.9 10.4L10.5 3.8" stroke="#4a3555" stroke-width="1.9" fill="none"/></svg>
<span class="t gc" style="left:23.6px;top:242px;letter-spacing:-0.169px;">Nevybrané ztvárnění</span>
<span class="t gc" style="left:168.5px;top:242px;">0</span>
<span class="t gc" style="left:193.8px;top:242px;letter-spacing:-0.67px;">11.8.2016</span>
<span class="t gc" style="left:257.5px;top:242px;letter-spacing:-0.34px;">Denní svodka TP</span>
<span class="t gc" style="left:402.3px;top:242px;letter-spacing:-0.179px;">00109/16/MPo</span>
<span class="t gc" style="left:547.5px;top:242px;letter-spacing:-0.292px;">70.4 - Rejst</span>
<div class="b" style="left:0;top:279px;width:604px;height:1px;background:#d0d0d0"></div>
<div class="b" style="left:2px;top:262px;width:14px;height:14px;border:1px solid #a6a6a6;background:linear-gradient(#eef2f9 0,#eef2f9 62%,#fff 63%)"></div><svg style="left:2px;top:262px" width="14" height="14" viewBox="0 0 14 14"><path d="M3.5 7L5.9 10.4L10.5 3.8" stroke="#4a3555" stroke-width="1.9" fill="none"/></svg>
<span class="t gc" style="left:23.6px;top:262px;letter-spacing:-0.169px;">Nevybrané ztvárnění</span>
<span class="t gc" style="left:168.5px;top:262px;">0</span>
<span class="t gc" style="left:193.8px;top:262px;letter-spacing:-0.67px;">11.8.2016</span>
<span class="t gc" style="left:257.5px;top:262px;letter-spacing:-0.34px;">Denní svodka TP</span>
<span class="t gc" style="left:402.3px;top:262px;letter-spacing:-0.179px;">00109/16/MPo</span>
<span class="t gc" style="left:547.5px;top:262px;letter-spacing:-0.292px;">70.4 - Rejst</span>
<div class="b" style="left:0;top:299px;width:604px;height:1px;background:#d0d0d0"></div>
<div class="b" style="left:2px;top:282px;width:14px;height:14px;border:1px solid #a6a6a6;background:linear-gradient(#eef2f9 0,#eef2f9 62%,#fff 63%)"></div><svg style="left:2px;top:282px" width="14" height="14" viewBox="0 0 14 14"><path d="M3.5 7L5.9 10.4L10.5 3.8" stroke="#4a3555" stroke-width="1.9" fill="none"/></svg>
<span class="t gc" style="left:23.6px;top:282px;letter-spacing:-0.169px;">Nevybrané ztvárnění</span>
<span class="t gc" style="left:168.5px;top:282px;">0</span>
<span class="t gc" style="left:193.8px;top:282px;letter-spacing:-0.67px;">11.8.2016</span>
<span class="t gc" style="left:257.5px;top:282px;letter-spacing:-0.34px;">Denní svodka TP</span>
<span class="t gc" style="left:402.3px;top:282px;letter-spacing:-0.179px;">00109/16/MPo</span>
<span class="t gc" style="left:547.5px;top:282px;letter-spacing:-0.292px;">70.4 - Rejst</span>
<div class="b" style="left:0;top:319px;width:604px;height:1px;background:#d0d0d0"></div>
<div class="b" style="left:2px;top:302px;width:14px;height:14px;border:1px solid #a6a6a6;background:linear-gradient(#eef2f9 0,#eef2f9 62%,#fff 63%)"></div><svg style="left:2px;top:302px" width="14" height="14" viewBox="0 0 14 14"><path d="M3.5 7L5.9 10.4L10.5 3.8" stroke="#4a3555" stroke-width="1.9" fill="none"/></svg>
<span class="t gc" style="left:23.6px;top:302px;letter-spacing:-0.169px;">Nevybrané ztvárnění</span>
<span class="t gc" style="left:168.5px;top:302px;">0</span>
<span class="t gc" style="left:193.8px;top:302px;letter-spacing:-0.67px;">11.8.2016</span>
<span class="t gc" style="left:257.5px;top:302px;letter-spacing:-0.34px;">Denní svodka TP</span>
<span class="t gc" style="left:402.3px;top:302px;letter-spacing:-0.179px;">00109/16/MPo</span>
<span class="t gc" style="left:547.5px;top:302px;letter-spacing:-0.292px;">70.4 - Rejst</span>
<div class="b" style="left:0;top:339px;width:604px;height:1px;background:#d0d0d0"></div>
<div class="b" style="left:2px;top:322px;width:14px;height:14px;border:1px solid #a6a6a6;background:linear-gradient(#eef2f9 0,#eef2f9 62%,#fff 63%)"></div><svg style="left:2px;top:322px" width="14" height="14" viewBox="0 0 14 14"><path d="M3.5 7L5.9 10.4L10.5 3.8" stroke="#4a3555" stroke-width="1.9" fill="none"/></svg>
<span class="t gc" style="left:23.6px;top:322px;letter-spacing:-0.169px;">Nevybrané ztvárnění</span>
<span class="t gc" style="left:168.5px;top:322px;">0</span>
<span class="t gc" style="left:193.8px;top:322px;letter-spacing:-0.67px;">11.8.2016</span>
<span class="t gc" style="left:257.5px;top:322px;letter-spacing:-0.34px;">Denní svodka TP</span>
<span class="t gc" style="left:402.3px;top:322px;letter-spacing:-0.179px;">00109/16/MPo</span>
<span class="t gc" style="left:547.5px;top:322px;letter-spacing:-0.292px;">70.4 - Rejst</span>
<div class="b" style="left:0;top:359px;width:604px;height:1px;background:#d0d0d0"></div>
<div class="b" style="left:2px;top:342px;width:14px;height:14px;border:1px solid #a6a6a6;background:linear-gradient(#eef2f9 0,#eef2f9 62%,#fff 63%)"></div><svg style="left:2px;top:342px" width="14" height="14" viewBox="0 0 14 14"><path d="M3.5 7L5.9 10.4L10.5 3.8" stroke="#4a3555" stroke-width="1.9" fill="none"/></svg>
<span class="t gc" style="left:23.6px;top:342px;letter-spacing:-0.169px;">Nevybrané ztvárnění</span>
<span class="t gc" style="left:168.5px;top:342px;">0</span>
<span class="t gc" style="left:193.8px;top:342px;letter-spacing:-0.67px;">11.8.2016</span>
<span class="t gc" style="left:257.5px;top:342px;letter-spacing:-0.34px;">Denní svodka TP</span>
<span class="t gc" style="left:402.3px;top:342px;letter-spacing:-0.179px;">00109/16/MPo</span>
<span class="t gc" style="left:547.5px;top:342px;letter-spacing:-0.292px;">70.4 - Rejst</span>
<div class="b" style="left:0;top:359px;width:604px;height:21px;background:#e6f0fd;border-top:1px solid #7b9bdc;border-bottom:1px solid #7b9bdc"></div>
<div class="b" style="left:20px;top:360px;width:1px;height:19px;background:#d0d0d0"></div>
<div class="b" style="left:165px;top:360px;width:1px;height:19px;background:#d0d0d0"></div>
<div class="b" style="left:190px;top:360px;width:1px;height:19px;background:#d0d0d0"></div>
<div class="b" style="left:254px;top:360px;width:1px;height:19px;background:#d0d0d0"></div>
<div class="b" style="left:399px;top:360px;width:1px;height:19px;background:#d0d0d0"></div>
<div class="b" style="left:544px;top:360px;width:1px;height:19px;background:#d0d0d0"></div>
<div class="b" style="left:2px;top:362px;width:14px;height:14px;border:1px solid #a6a6a6;background:linear-gradient(#eef2f9 0,#eef2f9 62%,#fff 63%)"></div><svg style="left:2px;top:362px" width="14" height="14" viewBox="0 0 14 14"><path d="M3.5 7L5.9 10.4L10.5 3.8" stroke="#4a3555" stroke-width="1.9" fill="none"/></svg>
<span class="t gc" style="left:23.6px;top:362px;letter-spacing:-0.169px;">Nevybrané ztvárnění</span>
<span class="t gc" style="left:168.5px;top:362px;">0</span>
<span class="t gc" style="left:193.8px;top:362px;letter-spacing:-0.67px;">11.8.2016</span>
<span class="t gc" style="left:257.5px;top:362px;letter-spacing:-0.34px;">Denní svodka TP</span>
<span class="t gc" style="left:402.3px;top:362px;letter-spacing:-0.179px;">00109/16/MPo</span>
<span class="t gc" style="left:547.5px;top:362px;letter-spacing:-0.292px;">70.4 - Rejst</span>
<div class="b" style="left:0;top:399px;width:604px;height:1px;background:#d0d0d0"></div>
<div class="b" style="left:2px;top:382px;width:14px;height:14px;border:1px solid #a6a6a6;background:linear-gradient(#eef2f9 0,#eef2f9 62%,#fff 63%)"></div>
<span class="t gc" style="left:168.5px;top:382px;">1</span>
<span class="t gc" style="left:193.8px;top:382px;letter-spacing:-0.775px;">20.8.2016</span>
<span class="t gc" style="left:257.5px;top:382px;letter-spacing:-0.34px;">Denní svodka TP</span>
<span class="t gc" style="left:402.3px;top:382px;letter-spacing:-0.179px;">00171/16/MPo</span>
<span class="t gc" style="left:547.5px;top:382px;letter-spacing:-0.292px;">70.4 - Rejst</span>
<div class="b" style="left:0;top:419px;width:604px;height:1px;background:#d0d0d0"></div>
<div class="b" style="left:2px;top:402px;width:14px;height:14px;border:1px solid #a6a6a6;background:linear-gradient(#eef2f9 0,#eef2f9 62%,#fff 63%)"></div>
<span class="t gc" style="left:168.5px;top:402px;">1</span>
<span class="t gc" style="left:193.8px;top:402px;letter-spacing:-0.775px;">12.8.2016</span>
<span class="t gc" style="left:257.5px;top:402px;letter-spacing:-0.743px;">Do DS</span>
<span class="t gc" style="left:402.3px;top:402px;letter-spacing:-0.254px;">00173/16/VTř</span>
<span class="t gc" style="left:547.5px;top:402px;letter-spacing:-0.438px;">53.1 - Syste</span>
<div class="b" style="left:0;top:439px;width:604px;height:1px;background:#d0d0d0"></div>
<div class="b" style="left:2px;top:422px;width:14px;height:14px;border:1px solid #a6a6a6;background:linear-gradient(#eef2f9 0,#eef2f9 62%,#fff 63%)"></div>
<span class="t gc" style="left:168.5px;top:422px;">1</span>
<span class="t gc" style="left:193.8px;top:422px;letter-spacing:-0.775px;">23.8.2016</span>
<span class="t gc" style="left:257.5px;top:422px;letter-spacing:-0.203px;">Test konverze</span>
<span class="t gc" style="left:402.3px;top:422px;letter-spacing:-0.254px;">00201/16/VTř</span>
<span class="t gc" style="left:547.5px;top:422px;letter-spacing:-0.384px;">51.3 - Doku</span>
</div>
<div class="b" style="left:415px;top:691px;width:604px;height:16px;background:#dcdcdc;"></div>
<div class="b" style="left:415px;top:691px;width:18px;height:16px;background:#ececec;"></div>
<div class="b" style="left:1001px;top:691px;width:18px;height:16px;background:#ececec;"></div>
<div class="b" style="left:433px;top:692px;width:270px;height:14px;background:#bcbcbc;"></div>
<div class="b" style="left:565px;top:696px;width:1px;height:6px;background:#e0e0e0;"></div>
<div class="b" style="left:567px;top:696px;width:1px;height:6px;background:#e0e0e0;"></div>
<div class="b" style="left:569px;top:696px;width:1px;height:6px;background:#e0e0e0;"></div>
<svg style="left:421px;top:696px" width="4" height="6"><path d="M4 0L0 3L4 6Z" fill="#9a7878"/></svg>
<svg style="left:1008px;top:696px" width="4" height="6"><path d="M0 0L4 3L0 6Z" fill="#a85060"/></svg>
<div class="b" style="left:415px;top:707px;width:604px;height:38px;background:linear-gradient(#eff2f7 0,#eff2f7 5px,#ececec 5px);border-top:1px solid #bcbcbc;"></div>
<div class="b" style="left:621px;top:713px;width:192px;height:27px;background:linear-gradient(#eff1f6 0,#eff1f6 50%,#ebebeb 51%,#ebebeb 100%);border:1px solid #a3a3a3;border-radius:2px;box-shadow:inset 0 0 0 1px #fdfdfd,1px 1px 0 #d4d4d4,2px 2px 0 #e2e2e2;"></div>
<svg style="left:627px;top:719px" width="16" height="16" viewBox="0 0 16 16"><path d="M1 16V1H10" fill="none" stroke="#4470d4" stroke-width="2"/><rect x="9.6" y="1.4" width="2" height="2" fill="#4470d4"/><rect x="11.6" y="3.4" width="2" height="2" fill="#4470d4"/><rect x="12" y="7.4" width="2" height="2" fill="#4470d4"/><rect x="2.6" y="13.6" width="2" height="2" fill="#4470d4"/><path d="M3.4 7.4L6 10L10.6 5.4" stroke="#4da32f" stroke-width="1.7" fill="none"/><path d="M6.8 12.2L10.2 15.6M10.2 12.2L6.8 15.6" stroke="#9c4050" stroke-width="1.3"/><path d="M10.8 13.6H14" stroke="#4da32f" stroke-width="1.5"/><path d="M13 11.2L15.9 13.6L13 16Z" fill="#4da32f"/></svg>
<span class="t btn" style="left:690.5px;top:718.5px;letter-spacing:-0.119px;">Navrhnout UJ</span>
<div class="b" style="left:817px;top:713px;width:193px;height:27px;background:linear-gradient(#eff1f6 0,#eff1f6 50%,#ebebeb 51%,#ebebeb 100%);border:1px solid #a3a3a3;border-radius:2px;box-shadow:inset 0 0 0 1px #fdfdfd,1px 1px 0 #d4d4d4,2px 2px 0 #e2e2e2;"></div>
<svg style="left:823px;top:719px" width="17" height="17" viewBox="0 0 17 17"><path d="M3 6.6V1H11.5L15 4.5V15H9" fill="none" stroke="#4470d4" stroke-width="2"/><path d="M0.2 11.4L3.6 8.4V10.2Q6.6 10.4 8.2 14.6Q5.8 12.6 3.6 12.8V14.4Z" fill="#8c4a55"/></svg>
<span class="t btn" style="left:887px;top:718.5px;letter-spacing:-0.114px;">Zrušit předání</span>
<div class="b" style="left:607px;top:188px;width:323px;height:330px;background:#fff;border:1px solid #6f90d8;box-shadow:0 0 0 1px #c8daf5,2px 4px 3px 1px rgba(140,172,228,.62);"></div>
<svg style="left:616px;top:192px" width="20" height="22" viewBox="0 0 20 22"><circle cx="10" cy="3.3" r="2.6" fill="#e9a126"/><path d="M4 10V8.2Q4 6.2 6.5 6.2H13.5Q16 6.2 16 8.2V10Z" fill="#e9a126"/><rect x="9.1" y="6.1" width="1.8" height="1.6" fill="#fff" opacity=".85"/><path d="M1 11H19V13.4H14L12.8 21H7.2L6 13.4H1Z" fill="#e9a126"/></svg>
<span class="t" style="left:644.4px;top:193px;font-size:15px;color:#333;line-height:20px;height:20px;letter-spacing:-0.132px">Výběr typů ztvárnění</span>
<svg style="left:909px;top:198px" width="9" height="9"><path d="M0.3 0.3L8.7 8.7M8.7 0.3L0.3 8.7" stroke="#000" stroke-width="1.35" fill="none"/></svg>
<div class="b" style="left:611px;top:221px;width:2px;height:2px;background:#b4b4b4"></div><div class="b" style="left:611px;top:225px;width:2px;height:2px;background:#b4b4b4"></div><div class="b" style="left:611px;top:229px;width:2px;height:2px;background:#b4b4b4"></div><div class="b" style="left:611px;top:233px;width:2px;height:2px;background:#b4b4b4"></div><svg style="left:619px;top:223px" width="12" height="12" viewBox="0 0 12 12"><rect x="0" y="0" width="2.7" height="12" rx="0.8" fill="#4470d4"/><path d="M12 0.4V11.6L2.7 6Z" fill="#4470d4" stroke="#4470d4" stroke-width="0.6" stroke-linejoin="round"/></svg><svg style="left:641px;top:223px" width="10" height="12" viewBox="0 0 10 12"><path d="M9.7 0.4V11.6L0.3 6Z" fill="#4470d4" stroke="#4470d4" stroke-width="0.6" stroke-linejoin="round"/></svg><svg style="left:661px;top:223px" width="11" height="12" viewBox="0 0 11 12"><path d="M0.3 0.4V11.6L10.7 6Z" fill="#4470d4" stroke="#4470d4" stroke-width="0.6" stroke-linejoin="round"/></svg><svg style="left:682px;top:223px" width="12" height="12" viewBox="0 0 12 12"><rect x="9.3" y="0" width="2.7" height="12" rx="0.8" fill="#4470d4"/><path d="M0 0.4V11.6L9.3 6Z" fill="#4470d4" stroke="#4470d4" stroke-width="0.6" stroke-linejoin="round"/></svg><svg style="left:702px;top:222px" width="15" height="15" viewBox="0 0 15 15"><path d="M2.32 7.05A5.2 5.2 0 0 1 12 4.9" stroke="#4da32f" stroke-width="2.4" fill="none"/><path d="M14.2 3.2L9.8 5.8L13.6 8Z" fill="#4da32f"/><path d="M12.68 7.95A5.2 5.2 0 0 1 3 10.1" stroke="#4da32f" stroke-width="2.4" fill="none"/><path d="M0.8 11.8L5.2 9.2L1.4 7Z" fill="#4da32f"/></svg>
<div class="b" style="left:608px;top:239px;width:321px;height:23px;background:#eff1f7;"></div>
<div class="b" style="left:608px;top:262px;width:321px;height:1px;background:#c6c6c6;"></div>
<div class="b" style="left:628px;top:239px;width:1px;height:244px;background:#d0d0d0;"></div>
<span class="t bl gh" style="left:631.5px;top:244px;letter-spacing:-0.337px;">Název</span>
<div class="b" style="left:608px;top:282px;width:321px;height:1px;background:#d0d0d0;"></div>
<div class="b" style="left:610px;top:265px;width:14px;height:14px;border:1px solid #a6a6a6;background:linear-gradient(#eef2f9 0,#eef2f9 62%,#fff 63%)"></div>
<span class="t gc" style="left:631.5px;top:265px;letter-spacing:-0.426px;">Konverze</span>
<div class="b" style="left:608px;top:302px;width:321px;height:1px;background:#d0d0d0;"></div>
<div class="b" style="left:610px;top:285px;width:14px;height:14px;border:1px solid #a6a6a6;background:linear-gradient(#eef2f9 0,#eef2f9 62%,#fff 63%)"></div>
<span class="t gc" style="left:631.5px;top:285px;letter-spacing:-0.001px;">Formáty</span>
<div class="b" style="left:608px;top:322px;width:321px;height:1px;background:#d0d0d0;"></div>
<div class="b" style="left:610px;top:305px;width:14px;height:14px;border:1px solid #a6a6a6;background:linear-gradient(#eef2f9 0,#eef2f9 62%,#fff 63%)"></div>
<span class="t gc" style="left:631.5px;top:305px;letter-spacing:-0.373px;">Došlé</span>
<div class="b" style="left:608px;top:342px;width:321px;height:1px;background:#d0d0d0;"></div>
<div class="b" style="left:610px;top:325px;width:14px;height:14px;border:1px solid #a6a6a6;background:linear-gradient(#eef2f9 0,#eef2f9 62%,#fff 63%)"></div>
<span class="t gc" style="left:631.5px;top:325px;letter-spacing:-0.318px;">Schválení</span>
<div class="b" style="left:608px;top:362px;width:321px;height:1px;background:#d0d0d0;"></div>
<div class="b" style="left:610px;top:345px;width:14px;height:14px;border:1px solid #a6a6a6;background:linear-gradient(#eef2f9 0,#eef2f9 62%,#fff 63%)"></div>
<span class="t gc" style="left:631.5px;top:345px;letter-spacing:-0.154px;">Kopie</span>
<div class="b" style="left:608px;top:382px;width:321px;height:1px;background:#d0d0d0;"></div>
<div class="b" style="left:610px;top:365px;width:14px;height:14px;border:1px solid #a6a6a6;background:linear-gradient(#eef2f9 0,#eef2f9 62%,#fff 63%)"></div>
<span class="t gc" style="left:631.5px;top:365px;letter-spacing:-0.375px;">Výtah</span>
<div class="b" style="left:608px;top:402px;width:321px;height:1px;background:#d0d0d0;"></div>
<div class="b" style="left:610px;top:385px;width:14px;height:14px;border:1px solid #a6a6a6;background:linear-gradient(#eef2f9 0,#eef2f9 62%,#fff 63%)"></div>
<span class="t gc" style="left:631.5px;top:385px;letter-spacing:-0.168px;">Založeno externí agendou</span>
<div class="b" style="left:608px;top:422px;width:321px;height:1px;background:#d0d0d0;"></div>
<div class="b" style="left:610px;top:405px;width:14px;height:14px;border:1px solid #a6a6a6;background:linear-gradient(#eef2f9 0,#eef2f9 62%,#fff 63%)"></div>
<span class="t gc" style="left:631.5px;top:405px;letter-spacing:-0.34px;">Denní svodka TP</span>
<div class="b" style="left:608px;top:442px;width:321px;height:1px;background:#d0d0d0;"></div>
<div class="b" style="left:610px;top:425px;width:14px;height:14px;border:1px solid #a6a6a6;background:linear-gradient(#eef2f9 0,#eef2f9 62%,#fff 63%)"></div>
<span class="t gc" style="left:631.5px;top:425px;letter-spacing:-0.178px;">Vyvěšení smlouvy</span>
<div class="b" style="left:608px;top:462px;width:321px;height:1px;background:#d0d0d0;"></div>
<div class="b" style="left:610px;top:445px;width:14px;height:14px;border:1px solid #a6a6a6;background:linear-gradient(#eef2f9 0,#eef2f9 62%,#fff 63%)"></div>
<span class="t gc" style="left:631.5px;top:445px;letter-spacing:-0.119px;">Označeno pro archivaci</span>
<div class="b" style="left:608px;top:462px;width:321px;height:21px;background:#e6f0fd;border-top:1px solid #7b9bdc;border-bottom:1px solid #7b9bdc;"></div>
<div class="b" style="left:628px;top:463px;width:1px;height:19px;background:#d0d0d0;"></div>
<div class="b" style="left:610px;top:465px;width:14px;height:14px;border:1px solid #a6a6a6;background:linear-gradient(#eef2f9 0,#eef2f9 62%,#fff 63%)"></div><svg style="left:610px;top:465px" width="14" height="14" viewBox="0 0 14 14"><path d="M3.5 7L5.9 10.4L10.5 3.8" stroke="#4a3555" stroke-width="1.9" fill="none"/></svg>
<span class="t gc" style="left:631.5px;top:465px;letter-spacing:-0.261px;">Podepsaná denní svodka TP</span>
<div class="b" style="left:608px;top:483px;width:321px;height:34px;background:linear-gradient(#eff2f7 0,#eff2f7 4px,#ececec 4px);"></div>
<div class="b" style="left:697px;top:487px;width:111px;height:27px;background:linear-gradient(#eff1f6 0,#eff1f6 50%,#ebebeb 51%,#ebebeb 100%);border:1px solid #a3a3a3;border-radius:2px;box-shadow:inset 0 0 0 1px #fdfdfd,1px 1px 0 #d4d4d4,2px 2px 0 #e2e2e2;"></div>
<svg style="left:703px;top:495px" width="16" height="14" viewBox="0 0 16 14"><path d="M1.6 7.4L5.6 11.2L14 1.6" stroke="#4da32f" stroke-width="3.8" fill="none"/></svg>
<span class="t btn" style="left:747px;top:492.5px;letter-spacing:0.181px;">Uložit</span>
<div class="b" style="left:812px;top:487px;width:111px;height:27px;background:linear-gradient(#eff1f6 0,#eff1f6 50%,#ebebeb 51%,#ebebeb 100%);border:1px solid #a3a3a3;border-radius:2px;box-shadow:inset 0 0 0 1px #fdfdfd,1px 1px 0 #d4d4d4,2px 2px 0 #e2e2e2;"></div>
<svg style="left:818px;top:493px" width="16" height="16" viewBox="0 0 16 16"><path d="M2.2 2.6L14 13.8M14 2.6L2.2 13.8" stroke="#9c5560" stroke-width="4.2" stroke-linecap="round" fill="none"/></svg>
<span class="t btn" style="left:851.5px;top:492.5px;letter-spacing:-0.004px;">Neukládat</span>
</body></html>
